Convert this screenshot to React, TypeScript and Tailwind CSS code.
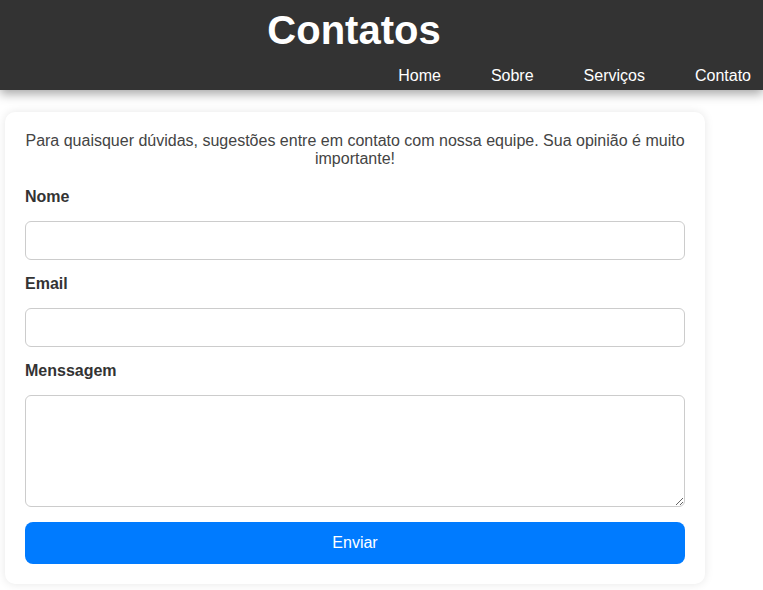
import React from "react";

export default function App() {
  const font = { fontFamily: '"Liberation Sans", Arial, sans-serif' };
  return (
    <div className="min-h-[590px] bg-white" style={font}>
      <header className="relative z-10 h-[90px] bg-[#333333] text-white shadow-[0_4px_10px_rgba(0,0,0,0.35)]">
        <h1 className="w-[708px] pt-[7px] text-center text-[40px] font-bold leading-[46px]">Contatos</h1>
        <nav className="mt-[14px] flex justify-end gap-[50px] pr-[12px] text-[16px] leading-[18px]">
          <a href="#">Home</a>
          <a href="#">Sobre</a>
          <a href="#">Serviços</a>
          <a href="#">Contato</a>
        </nav>
      </header>
      <main className="pt-[22px] pb-[6px]">
        <div className="ml-[5px] w-[700px] rounded-[10px] bg-white p-[20px] shadow-[0_0_10px_rgba(0,0,0,0.1)]">
          <p className="mb-[19px] text-center text-[16px] leading-[18px] text-[#444444]">
            Para quaisquer dúvidas, sugestões entre em contato com nossa equipe. Sua opinião é muito importante!
          </p>
          <form className="flex flex-col" onSubmit={(e) => e.preventDefault()}>
            <label className="mb-[15px] pt-[1px] text-[16px] font-bold leading-[18px] text-[#333333]">Nome</label>
            <input type="text" className="mb-[14px] h-[39px] w-full rounded-[6px] border border-[#cccccc] px-[10px] outline-none" />
            <label className="mb-[15px] pt-[1px] text-[16px] font-bold leading-[18px] text-[#333333]">Email</label>
            <input type="email" className="mb-[14px] h-[39px] w-full rounded-[6px] border border-[#cccccc] px-[10px] outline-none" />
            <label className="mb-[15px] pt-[1px] text-[16px] font-bold leading-[18px] text-[#333333]">Menssagem</label>
            <textarea className="mb-[15px] block h-[112px] w-full rounded-[6px] border border-[#cccccc] p-[10px] outline-none" />
            <button type="submit" className="h-[42px] w-full rounded-[8px] bg-[#007bff] text-[16px] text-white">
              Enviar
            </button>
          </form>
        </div>
      </main>
    </div>
  );
}
